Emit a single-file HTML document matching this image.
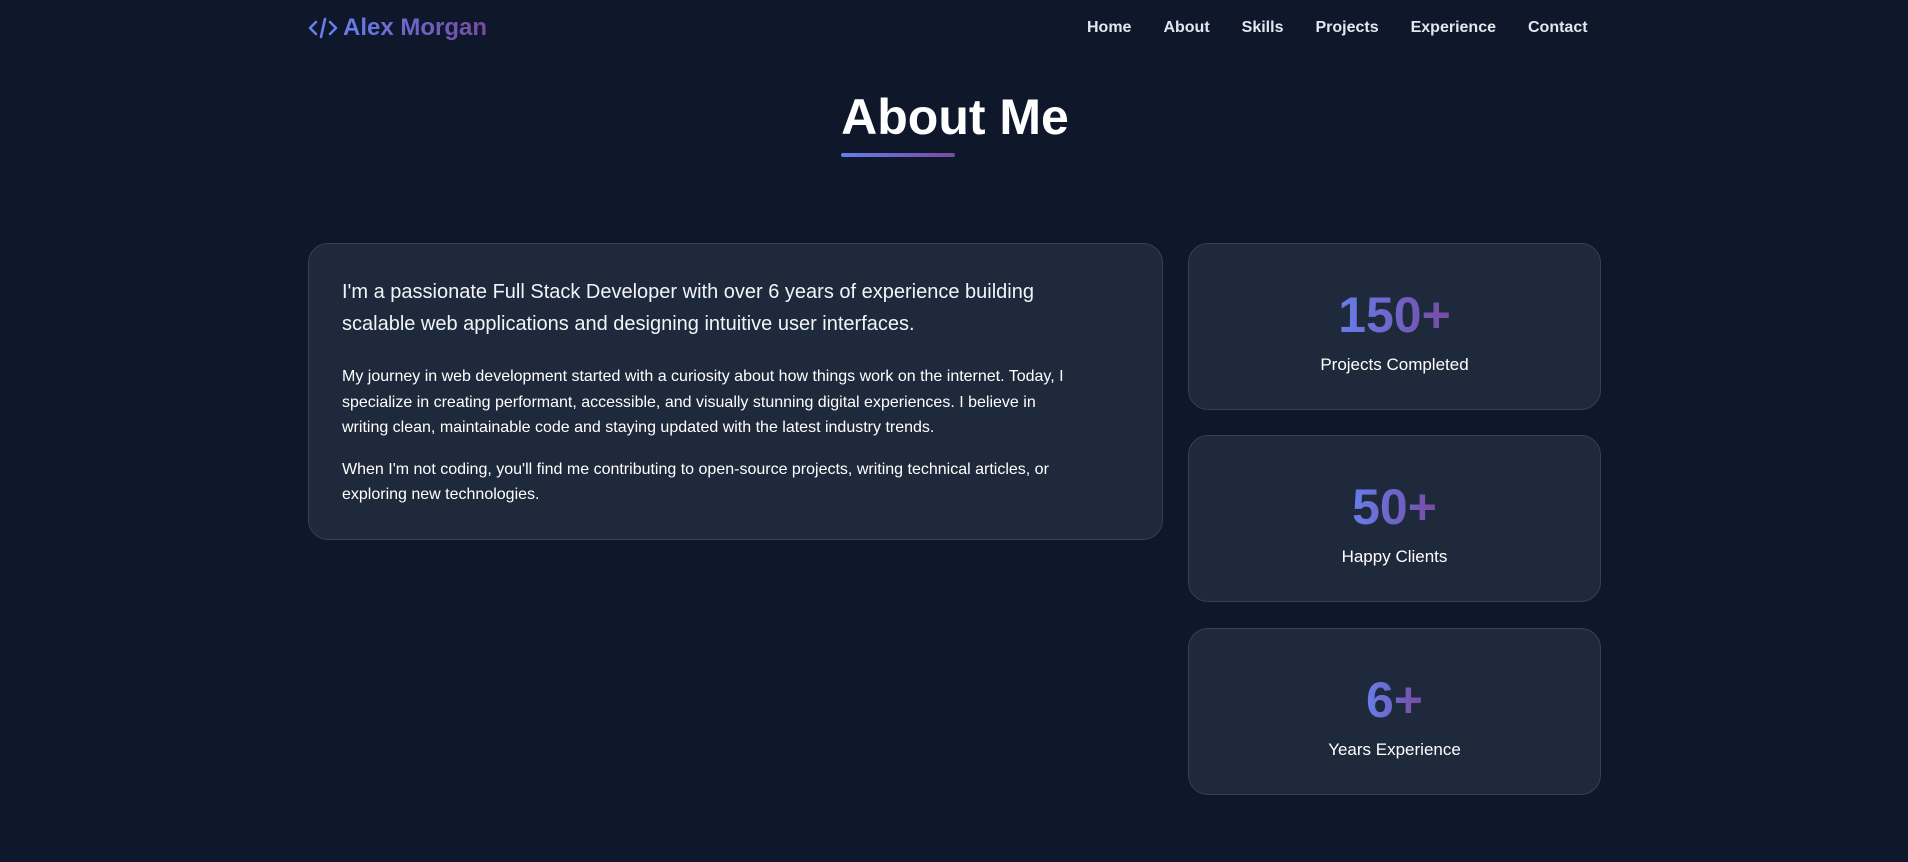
<!DOCTYPE html>
<html><head><meta charset="utf-8"><style>
*{margin:0;padding:0;box-sizing:border-box}
body{width:1908px;height:862px;background:#0f172a;font-family:"Liberation Sans",sans-serif;color:#f1f5f9;overflow:hidden;position:relative}
.grad{background:linear-gradient(90deg,#667eea,#764ba2);-webkit-background-clip:text;background-clip:text;color:transparent}
.logo{position:absolute;left:307px;top:14px;font-size:24px;font-weight:700;display:flex;align-items:center;gap:4px}
.nav{position:absolute;top:19px;left:1087px;display:flex;font-size:16px;font-weight:600;color:#e2e8f0}
.nav span{margin-right:32px}
h1{position:absolute;left:0;width:1910px;text-align:center;top:88px;font-size:50px;font-weight:700;color:#fff}
.ul{position:absolute;left:841px;top:153px;width:114px;height:4px;border-radius:2px;background:linear-gradient(90deg,#667eea,#764ba2)}
.card{position:absolute;background:#1e293b;border:1px solid #334155;border-radius:20px}
.main{left:308px;top:243px;width:855px;height:297px;padding:32px 33px}
.lead{font-size:20px;line-height:32px;color:#f1f5f9;margin-bottom:24px;max-width:740px}
.p{font-size:16px;line-height:25.6px;color:#fff;margin-bottom:16px;max-width:735px}
.stat{left:1188px;width:413px;height:167px;text-align:center;padding-top:40px}
.num{font-size:50px;font-weight:700;line-height:62px;display:inline-block}
.lab{font-size:17px;color:#fff;margin-top:9px}
</style></head><body>
<div class="logo"><svg width="32" height="28" viewBox="0 0 32 28" fill="none" stroke="#667eea" stroke-width="2.6" stroke-linecap="round" stroke-linejoin="round"><path d="M9 8 L3 14 L9 20"/><path d="M18 5 L14 23"/><path d="M23 8 L29 14 L23 20"/></svg><span class="grad">Alex Morgan</span></div>
<div class="nav"><span>Home</span><span>About</span><span>Skills</span><span>Projects</span><span>Experience</span><span>Contact</span></div>
<h1>About Me</h1>
<div class="ul"></div>
<div class="card main">
<p class="lead">I'm a passionate Full Stack Developer with over 6 years of experience building scalable web applications and designing intuitive user interfaces.</p>
<p class="p">My journey in web development started with a curiosity about how things work on the internet. Today, I specialize in creating performant, accessible, and visually stunning digital experiences. I believe in writing clean, maintainable code and staying updated with the latest industry trends.</p>
<p class="p">When I'm not coding, you'll find me contributing to open-source projects, writing technical articles, or exploring new technologies.</p>
</div>
<div class="card stat" style="top:243px"><div class="num grad">150+</div><div class="lab">Projects Completed</div></div>
<div class="card stat" style="top:435px"><div class="num grad">50+</div><div class="lab">Happy Clients</div></div>
<div class="card stat" style="top:628px"><div class="num grad">6+</div><div class="lab">Years Experience</div></div>
</body></html>
